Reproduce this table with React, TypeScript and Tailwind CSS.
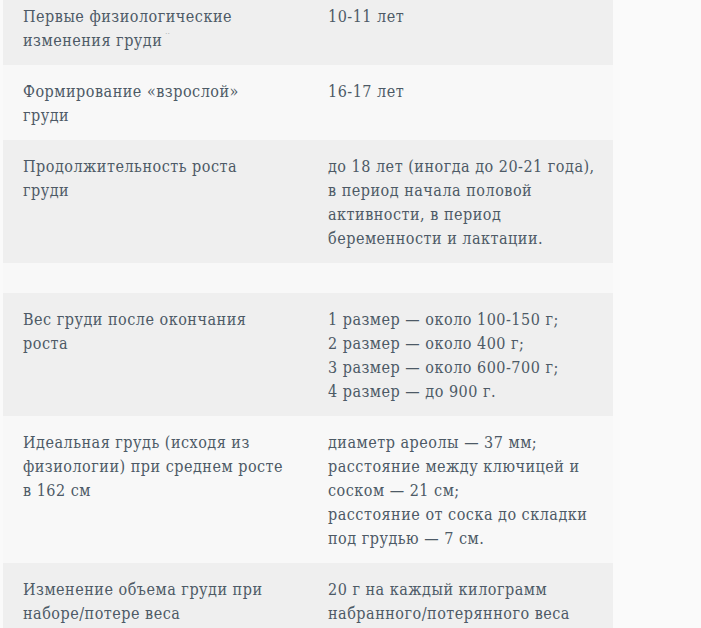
import React from "react";

type Row = { label: React.ReactNode; value: React.ReactNode; shaded: boolean };

const rows: Row[] = [
  {
    label: (
      <>
        Первые физиологические
        <br />
        изменения груди
        <span className="ml-[3px] inline-block align-top text-[7px] leading-[10px] text-[#9aa3ab]">··</span>
      </>
    ),
    value: "10-11 лет",
    shaded: true,
  },
  {
    label: (
      <>
        Формирование «взрослой»
        <br />
        груди
      </>
    ),
    value: "16-17 лет",
    shaded: false,
  },
  {
    label: (
      <>
        Продолжительность роста
        <br />
        груди
      </>
    ),
    value: (
      <>
        до 18 лет (иногда до 20-21 года),
        <br />
        в период начала половой
        <br />
        активности, в период
        <br />
        беременности и лактации.
      </>
    ),
    shaded: true,
  },
];

const rows2: Row[] = [
  {
    label: (
      <>
        Вес груди после окончания
        <br />
        роста
      </>
    ),
    value: (
      <>
        1 размер — около 100-150 г;
        <br />2 размер — около 400 г;
        <br />3 размер — около 600-700 г;
        <br />4 размер — до 900 г.
      </>
    ),
    shaded: true,
  },
  {
    label: (
      <>
        Идеальная грудь (исходя из
        <br />
        физиологии) при среднем росте
        <br />
        в 162 см
      </>
    ),
    value: (
      <>
        диаметр ареолы — 37 мм;
        <br />
        расстояние между ключицей и
        <br />
        соском — 21 см;
        <br />
        расстояние от соска до складки
        <br />
        под грудью — 7 см.
      </>
    ),
    shaded: false,
  },
  {
    label: (
      <>
        Изменение объема груди при
        <br />
        наборе/потере веса
      </>
    ),
    value: (
      <>
        20 г на каждый килограмм
        <br />
        набранного/потерянного веса
      </>
    ),
    shaded: true,
  },
];

const TableRow = ({ row }: { row: Row }) => (
  <div className={`grid grid-cols-2 ${row.shaded ? "bg-[#efefef]" : "bg-[#f8f8f8]"}`}>
    <div className="whitespace-nowrap pl-5 pr-2 pt-[15px] pb-3">{row.label}</div>
    <div className="whitespace-nowrap pl-5 pr-2 pt-[15px] pb-3">{row.value}</div>
  </div>
);

const App = () => {
  return (
    <div className="min-h-[628px] w-[701px] overflow-hidden bg-[#fafafa]">
      <div
        className="-mt-[10px] ml-[3px] w-[610px] text-[16px] leading-6 tracking-[0.5px] text-[#4d5a66] font-stretch-condensed"
        style={{ fontFamily: '"DejaVu Serif", "Liberation Serif", serif' }}
      >
        {rows.map((r, i) => (
          <TableRow key={i} row={r} />
        ))}
        <div className="h-[30px] bg-[#f8f8f8]" />
        {rows2.map((r, i) => (
          <TableRow key={i} row={r} />
        ))}
      </div>
    </div>
  );
};

export default App;
